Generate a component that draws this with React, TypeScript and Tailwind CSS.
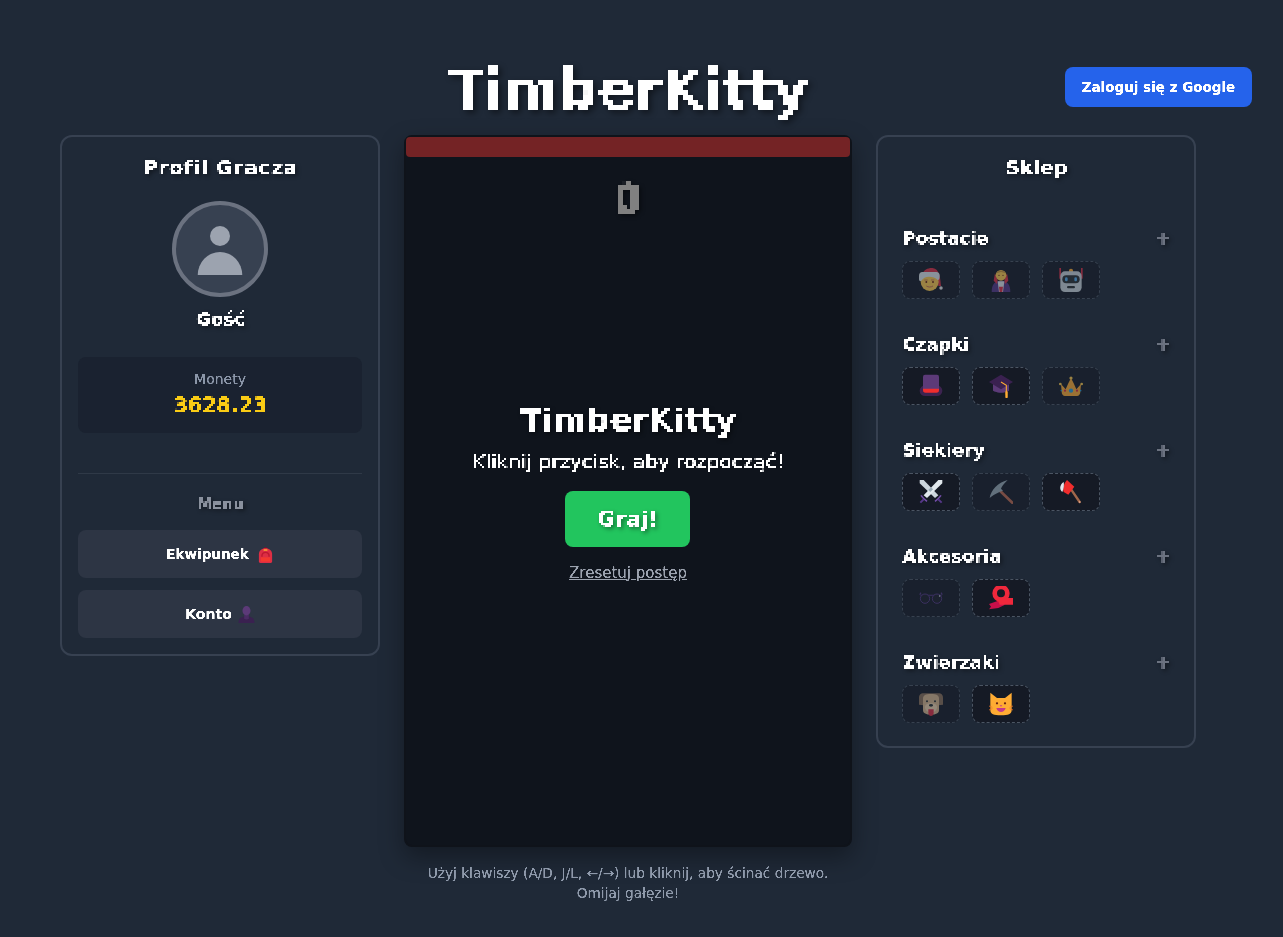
const P5 = "inline-block [filter:url(#p5)_drop-shadow(3px_3px_3px_rgba(0,0,0,0.45))]";
const P4 = "inline-block [filter:url(#p4)_drop-shadow(2px_2px_2px_rgba(0,0,0,0.4))]";
const P3 = "inline-block [filter:url(#p3)_drop-shadow(2px_2px_2px_rgba(0,0,0,0.4))]";
const P2 = "inline-block [filter:url(#p2)_drop-shadow(2px_2px_2px_rgba(0,0,0,0.4))]";
const P2N = "inline-block [filter:url(#p2)]";
const P2R = "inline-block [filter:url(#p2r)]";
const CRISP = "inline-block [filter:url(#crisp)]";

function Filters() {
  const make = (id: string, p: number, r: number, ox: number, oy: number) => (
    <filter id={id} x="0" y="0" width="100%" height="100%" colorInterpolationFilters="sRGB">
      <feFlood x={ox} y={oy} width="1" height="1" />
      <feComposite width={p} height={p} />
      <feTile result="a" />
      <feComposite in="SourceGraphic" in2="a" operator="in" />
      <feComponentTransfer>
        <feFuncA type="linear" slope="20" intercept="-9" />
      </feComponentTransfer>
      <feMorphology operator="dilate" radius={r} />
    </filter>
  );
  const make2 = (id: string, intercept: string) => (
    <filter id={id} x="0" y="0" width="100%" height="100%" colorInterpolationFilters="sRGB">
      <feFlood x="0" y="1" width="1" height="1" />
      <feComposite width="2" height="2" />
      <feTile result="a" />
      <feComposite in="SourceGraphic" in2="a" operator="in" result="s" />
      <feComponentTransfer in="s" result="t">
        <feFuncA type="linear" slope="5" intercept={intercept} />
      </feComponentTransfer>
      <feOffset in="t" dx="1" dy="0" result="o1" />
      <feMerge result="m">
        <feMergeNode in="t" />
        <feMergeNode in="o1" />
      </feMerge>
      <feOffset in="m" dx="0" dy="1" result="o2" />
      <feMerge>
        <feMergeNode in="m" />
        <feMergeNode in="o2" />
      </feMerge>
    </filter>
  );
  return (
    <svg className="absolute h-0 w-0" aria-hidden="true">
      <defs>
        {make("p5", 5, 2, 2, 2)}
        {make("p4", 4, 2, 1, 1)}
        {make("p3", 3, 1, 1, 0)}
        {make2("p2", "-1.8")}
        {make2("p2r", "-1")}
        <filter id="crisp" x="0" y="0" width="100%" height="100%" colorInterpolationFilters="sRGB">
          <feComponentTransfer>
            <feFuncA type="linear" slope="3" intercept="-0.7" />
          </feComponentTransfer>
        </filter>
      </defs>
    </svg>
  );
}

const Santa = () => (
  <svg viewBox="0 0 36 36" className="h-6 w-6">
    <circle cx="33" cy="30" r="2.6" fill="#e6e7e8" />
    <path d="M5 9C7 3 13 0 19 0c7 0 13 5 14 27h-4c0-6-1-11-3-14z" fill="#dd2e44" />
    <circle cx="16" cy="21" r="13.5" fill="#ffcc4d" />
    <path d="M3 20c-2 0-3-1-3-3v-5c0-4 2-6 5-6h21c3 0 5 2 5 5v2c0 3-1 5-3 5-3-4-8-5-13-5s-9 2-12 7z" fill="#e1e8ed" />
    <path d="M8 18h5M18 18h5" stroke="#c1694f" strokeWidth="1.2" />
    <circle cx="11" cy="21" r="1.4" fill="#662113" />
    <circle cx="21" cy="21" r="1.4" fill="#662113" />
    <path d="M11 27c3 2 7 2 10 0" stroke="#c1694f" strokeWidth="1.4" fill="none" />
  </svg>
);
const Vampire = () => (
  <svg viewBox="0 0 36 36" className="h-6 w-6">
    <path d="M4 36c0-12 5-17 14-17s14 5 14 17z" fill="#553788" />
    <path d="M9 8l4 10-1 6-5-5zM27 8l-4 10 1 6 5-5z" fill="#dd2e44" />
    <path d="M13 20h10l-2 16h-6z" fill="#e1e8ed" />
    <path d="M15 28h6l-1 8h-4z" fill="#dd2e44" />
    <circle cx="18" cy="11" r="8" fill="#ffcc4d" />
    <path d="M11 8c1-5 13-5 14 0l-7-2z" fill="#c8963c" />
    <circle cx="15" cy="11" r="1" fill="#662113" />
    <circle cx="21" cy="11" r="1" fill="#662113" />
  </svg>
);
const Robot = () => (
  <svg viewBox="0 0 36 36" className="h-6 w-6">
    <path d="M15 4c0-2 1-3 3-3s3 1 3 3v3h-6z" fill="#ffac33" />
    <rect x="0.5" y="0" width="2.5" height="16" fill="#dd2e44" />
    <rect x="33" y="0" width="2.5" height="16" fill="#dd2e44" />
    <rect x="2" y="5" width="32" height="31" rx="7" fill="#ccd6dd" />
    <rect x="5" y="11" width="26" height="12" rx="6" fill="#292f33" />
    <rect x="9" y="14" width="4" height="6" rx="2" fill="#55acee" />
    <rect x="23" y="14" width="4" height="6" rx="2" fill="#55acee" />
    <rect x="12" y="27" width="12" height="3.5" rx="1.7" fill="#292f33" />
  </svg>
);
const TopHat = () => (
  <svg viewBox="0 0 36 36" className="h-6 w-6">
    <rect x="1" y="17" width="34" height="16" rx="8" fill="#3d2350" />
    <rect x="6" y="1" width="24" height="24" rx="3" fill="#5c3a78" />
    <path d="M6 22h24v2c0 3-1 4-4 4H10c-3 0-4-1-4-4z" fill="#f02d2d" />
  </svg>
);
const GradCap = () => (
  <svg viewBox="0 0 36 36" className="h-6 w-6">
    <path d="M6 14v11c0 0 5 3 12 3s12-3 12-3V14z" fill="#5c3a78" />
    <path d="M0 12L18 1l18 11-18 11z" fill="#3a2150" />
    <path d="M18 12l8 5v14" stroke="#ffac33" strokeWidth="1.6" fill="none" />
    <rect x="24.5" y="26" width="3.6" height="10" rx="1" fill="#ffac33" />
  </svg>
);
const Crown = () => (
  <svg viewBox="0 -3 36 36" className="h-6 w-6">
    <path d="M3 12l7 8 4-9 4-8 4 8 4 9 7-8-1 12c0 3-2 6-5 6H9c-3 0-5-3-5-6z" fill="#ffac33" />
    <circle cx="2" cy="12" r="2" fill="#ffcc4d" />
    <circle cx="34" cy="12" r="2" fill="#ffcc4d" />
    <circle cx="18" cy="3" r="2.4" fill="#ffcc4d" />
    <circle cx="18" cy="22" r="3.2" fill="#289fdc" />
    <circle cx="9" cy="22" r="1.7" fill="#dd2e44" />
    <circle cx="27" cy="22" r="1.7" fill="#dd2e44" />
    <circle cx="3.5" cy="22" r="1.2" fill="#289fdc" />
    <circle cx="32.5" cy="22" r="1.2" fill="#289fdc" />
  </svg>
);
const Swords = () => (
  <svg viewBox="0 0 36 36" className="h-6 w-6">
    <path d="M1 0h6l22 23-5 4L1 5z" fill="#ccd6dd" />
    <path d="M35 0h-6L7 23l5 4L35 5z" fill="#e1e8ed" />
    <path d="M18 11l3 3-4 4-3-3z" fill="#99aab5" />
    <path d="M3 23c2 3 5 6 9 9M33 23c-2 3-5 6-9 9" stroke="#744eaa" strokeWidth="2.4" fill="none" />
    <path d="M7 29l-5 5M29 29l5 5" stroke="#553788" strokeWidth="3" fill="none" />
  </svg>
);
const Pick = () => (
  <svg viewBox="0 0 36 36" className="h-6 w-6">
    <path d="M14 14l21 20" stroke="#c1694f" strokeWidth="4" strokeLinecap="round" />
    <path d="M1 27C3 15 13 4 28 0c-6 6-9 10-10 13l3 3c-3 1-6 2-9 4-4 2-7 4-11 7z" fill="#99aab5" />
  </svg>
);
const Axe = () => (
  <svg viewBox="0 0 36 36" className="h-6 w-6">
    <path d="M14 8l17 25" stroke="#a0674b" strokeWidth="3.6" strokeLinecap="round" />
    <circle cx="31" cy="33" r="1.4" fill="#d99e82" />
    <path d="M12 0l11 10-9 12-7-4C5 13 7 6 12 0z" fill="#f02d2d" />
    <path d="M7 3C1 7 0 14 5 18c2-5 3-10 2-15z" fill="#e1e8ed" />
  </svg>
);
const Shades = () => (
  <svg viewBox="0 0 36 36" className="h-6 w-6">
    <path d="M2 14h32M1 13l2-3M35 13l-2-3" stroke="#553788" strokeWidth="1.6" fill="none" />
    <circle cx="9" cy="19" r="7" fill="#1a1d2a" stroke="#553788" strokeWidth="1.4" />
    <circle cx="27" cy="19" r="7" fill="#1a1d2a" stroke="#553788" strokeWidth="1.4" />
    <circle cx="31" cy="15" r="1.2" fill="#e1e8ed" />
  </svg>
);
const Scarf = () => (
  <svg viewBox="0 0 36 36" className="h-6 w-6">
    <path d="M0 27l14-5 10 6-10 5-14 2 3-4z" fill="#c8104a" />
    <circle cx="18" cy="11" r="9.5" fill="none" stroke="#f0283c" strokeWidth="7" />
    <path d="M12 18h24v10H16z" fill="#f0283c" />
  </svg>
);
const Dog = () => (
  <svg viewBox="0 0 36 36" className="h-6 w-6">
    <path d="M7 2h22c5 0 7 3 7 7v10l-7 1-4-10H11L7 20 0 19V9c0-4 2-7 7-7z" fill="#8a6f58" />
    <path d="M6 10c0-5 4-7 12-7s12 2 12 7v17c0 5-5 7-12 7S6 32 6 27z" fill="#d9b78f" />
    <path d="M9 23c0-4 4-6 9-6s9 2 9 6-4 8-9 8-9-4-9-8z" fill="#f0d5b0" />
    <circle cx="12" cy="14" r="1.5" fill="#292f33" />
    <circle cx="24" cy="14" r="1.5" fill="#292f33" />
    <ellipse cx="18" cy="20" rx="3" ry="2" fill="#292f33" />
    <path d="M14 26h8v5c0 3-2 5-4 5s-4-2-4-5z" fill="#dd2e44" />
  </svg>
);
const Cat = () => (
  <svg viewBox="0 0 36 36" className="h-6 w-6">
    <path d="M2 1l10 8h12l10-8v26c0 6-5 8-16 8S2 33 2 27z" fill="#ffac33" />
    <circle cx="12" cy="17" r="1.7" fill="#662113" />
    <circle cx="24" cy="17" r="1.7" fill="#662113" />
    <path d="M16 20h4l-2 2z" fill="#c43a8a" />
    <path d="M11 24h14c-1 4-4 6-7 6s-6-2-7-6z" fill="#c43a8a" />
    <path d="M0 21l5 2M0 27l5-2M36 21l-5 2M36 27l-5-2" stroke="#e8752a" strokeWidth="1.2" />
  </svg>
);
const Backpack = () => (
  <svg viewBox="0 0 36 36" className="h-[17px] w-[17px]">
    <path d="M14 6c0-4 8-4 8 0v3h-8z" fill="#a0041e" />
    <path d="M4 18C4 10 10 5 18 5s14 5 14 13v15c0 2-1 3-3 3H7c-2 0-3-1-3-3z" fill="#dd2e44" />
    <path d="M9 20c0-5 4-8 9-8s9 3 9 8v3h-3v-3c0-3-3-5-6-5s-6 2-6 5v3H9z" fill="#be1931" />
    <path d="M8 24h20v9H8z" fill="#f4392f" />
    <path d="M14 7h8v3h-8z" fill="#ffac33" />
  </svg>
);
const PersonIcon = () => (
  <svg viewBox="0 0 36 36" className="h-[17px] w-[17px]">
    <path d="M1 36c0-8 4-12 10-13h14c6 1 10 5 10 13z" fill="#3a2150" />
    <path d="M13 18h10v9c-2 2-8 2-10 0z" fill="#4a2c64" />
    <ellipse cx="18" cy="10" rx="8.5" ry="10" fill="#5c3a78" />
  </svg>
);

const sections = [
  { name: "Postacie", items: [[Santa, "opacity-[0.55]"], [Vampire, "opacity-[0.55]"], [Robot, "opacity-[0.55]"]] },
  { name: "Czapki", items: [[TopHat, "opacity-100"], [GradCap, "opacity-100"], [Crown, "opacity-[0.55]"]] },
  { name: "Siekiery", items: [[Swords, "opacity-100"], [Pick, "opacity-[0.55]"], [Axe, "opacity-100"]] },
  { name: "Akcesoria", items: [[Shades, "opacity-[0.55]"], [Scarf, "opacity-100"]] },
  { name: "Zwierzaki", items: [[Dog, "opacity-[0.55]"], [Cat, "opacity-100"]] },
] as const;

export default function App() {
  return (
    <div className="relative min-h-[937px] bg-[#1f2937] pl-[60px] font-['DejaVu_Sans',sans-serif] text-white">
      <Filters />
      <button className="absolute right-[31px] top-[67px] h-10 w-[187px] rounded-lg bg-[#2563eb] text-[13.5px] font-bold"><span className={CRISP}>Zaloguj się z Google</span></button>
      <header className="flex h-[135px] w-[1136px] items-center justify-center pt-[44px]">
        <h1 className="text-[54px] leading-[60px] font-bold"><span className={P5}>TimberKitty</span></h1>
      </header>
      <main className="flex w-[1136px] items-start gap-6">
        <aside className="w-80 rounded-xl border-2 border-[#374151] p-4 text-center">
          <h2 className="text-xl font-bold tracking-[0.8px]"><span className={P2}>Profil Gracza</span></h2>
          <div className="mx-auto mt-5 flex h-24 w-24 items-center justify-center rounded-full border-4 border-[#6b7280] bg-[#374151]">
            <svg viewBox="0 0 24 24" className="h-[60px] w-[60px] fill-[#9ca3af]"><circle cx="12" cy="6.8" r="4" /><path d="M3.1 22.4a8.9 9.2 0 0 1 17.8 0z" /></svg>
          </div>
          <p className="mt-2 text-lg font-bold"><span className={P2}>Gość</span></p>
          <div className="mt-6 h-[76px] rounded-lg bg-[#1a2230] pt-3">
            <p className="text-sm text-[#8b96a8]"><span className={CRISP}>Monety</span></p>
            <p className="text-[20.5px] leading-8 font-bold text-[#facc15]"><span className={P2N}>3628.23</span></p>
          </div>
          <div className="mt-10 border-t border-[#2f3947]" />
          <h3 className="mt-4 text-[15px] leading-7 font-bold text-[#8a919e]"><span className={P2}>Menu</span></h3>
          <button className="mt-3 flex h-12 w-full items-center justify-center gap-2 rounded-lg bg-[#2d3544] text-[13.5px] font-bold"><span className={CRISP}>Ekwipunek</span><Backpack /></button>
          <button className="mt-3 flex h-12 w-full items-center justify-center gap-[6px] rounded-lg bg-[#2d3544] text-sm font-bold"><span className={CRISP}>Konto</span><PersonIcon /></button>
        </aside>
        <section className="w-[448px]">
          <div className="relative flex h-[712px] flex-col items-center rounded-lg border-2 border-[#0f131a] bg-[#0f141c] shadow-[0_10px_25px_rgba(0,0,0,0.35)]">
            <div className="h-5 w-full rounded bg-[#742325]" />
            <div className="mt-[13px] font-['Roboto',sans-serif] text-[44px] leading-[60px] font-bold text-[#808080]"><span className={P4}>0</span></div>
            <div className="absolute inset-0 flex flex-col items-center justify-center">
              <h2 className="text-[32.4px] leading-10 font-bold"><span className={P3}>TimberKitty</span></h2>
              <p className="mt-[7px] text-[20px] leading-7"><span className={P2R}>Kliknij przycisk, aby rozpocząć!</span></p>
              <button className="mt-4 mr-px h-14 w-[125px] rounded-lg bg-[#22c55e] text-[22px] font-bold"><span className={P2}>Graj!</span></button>
              <a className="mt-4 text-[15px] leading-5 text-[#9ca3af]"><span className={`${CRISP} underline`}>Zresetuj postęp</span></a>
            </div>
          </div>
          <p className="mt-4 text-center text-[13.7px] leading-5 text-[#8f9aab]"><span className={CRISP}>Użyj klawiszy (A/D, J/L, ←/→) lub kliknij, aby ścinać drzewo.<br />Omijaj gałęzie!</span></p>
        </section>
        <aside className="w-80 rounded-xl border-2 border-[#374151] p-4">
          <h2 className="text-center text-xl font-bold"><span className={P2}>Sklep</span></h2>
          <div className="mt-[43px] flex flex-col gap-[31px] px-2 pb-[7px]">
            {sections.map((s) => (
              <div key={s.name}>
                <div className="flex h-7 items-center justify-between">
                  <span className="text-lg font-bold"><span className={P2}>{s.name}</span></span>
                  <span className="text-lg font-bold text-[#6b7280]"><span className={P2}>+</span></span>
                </div>
                <div className="mt-[9px] flex gap-3">
                  {s.items.map(([E, o], i) => (
                    <div key={i} className={`flex h-[38px] w-[58px] items-center justify-center rounded-lg border border-dashed border-[#4b5563] bg-[#151a25] ${o}`}>
                      <E />
                    </div>
                  ))}
                </div>
              </div>
            ))}
          </div>
        </aside>
      </main>
    </div>
  );
}
